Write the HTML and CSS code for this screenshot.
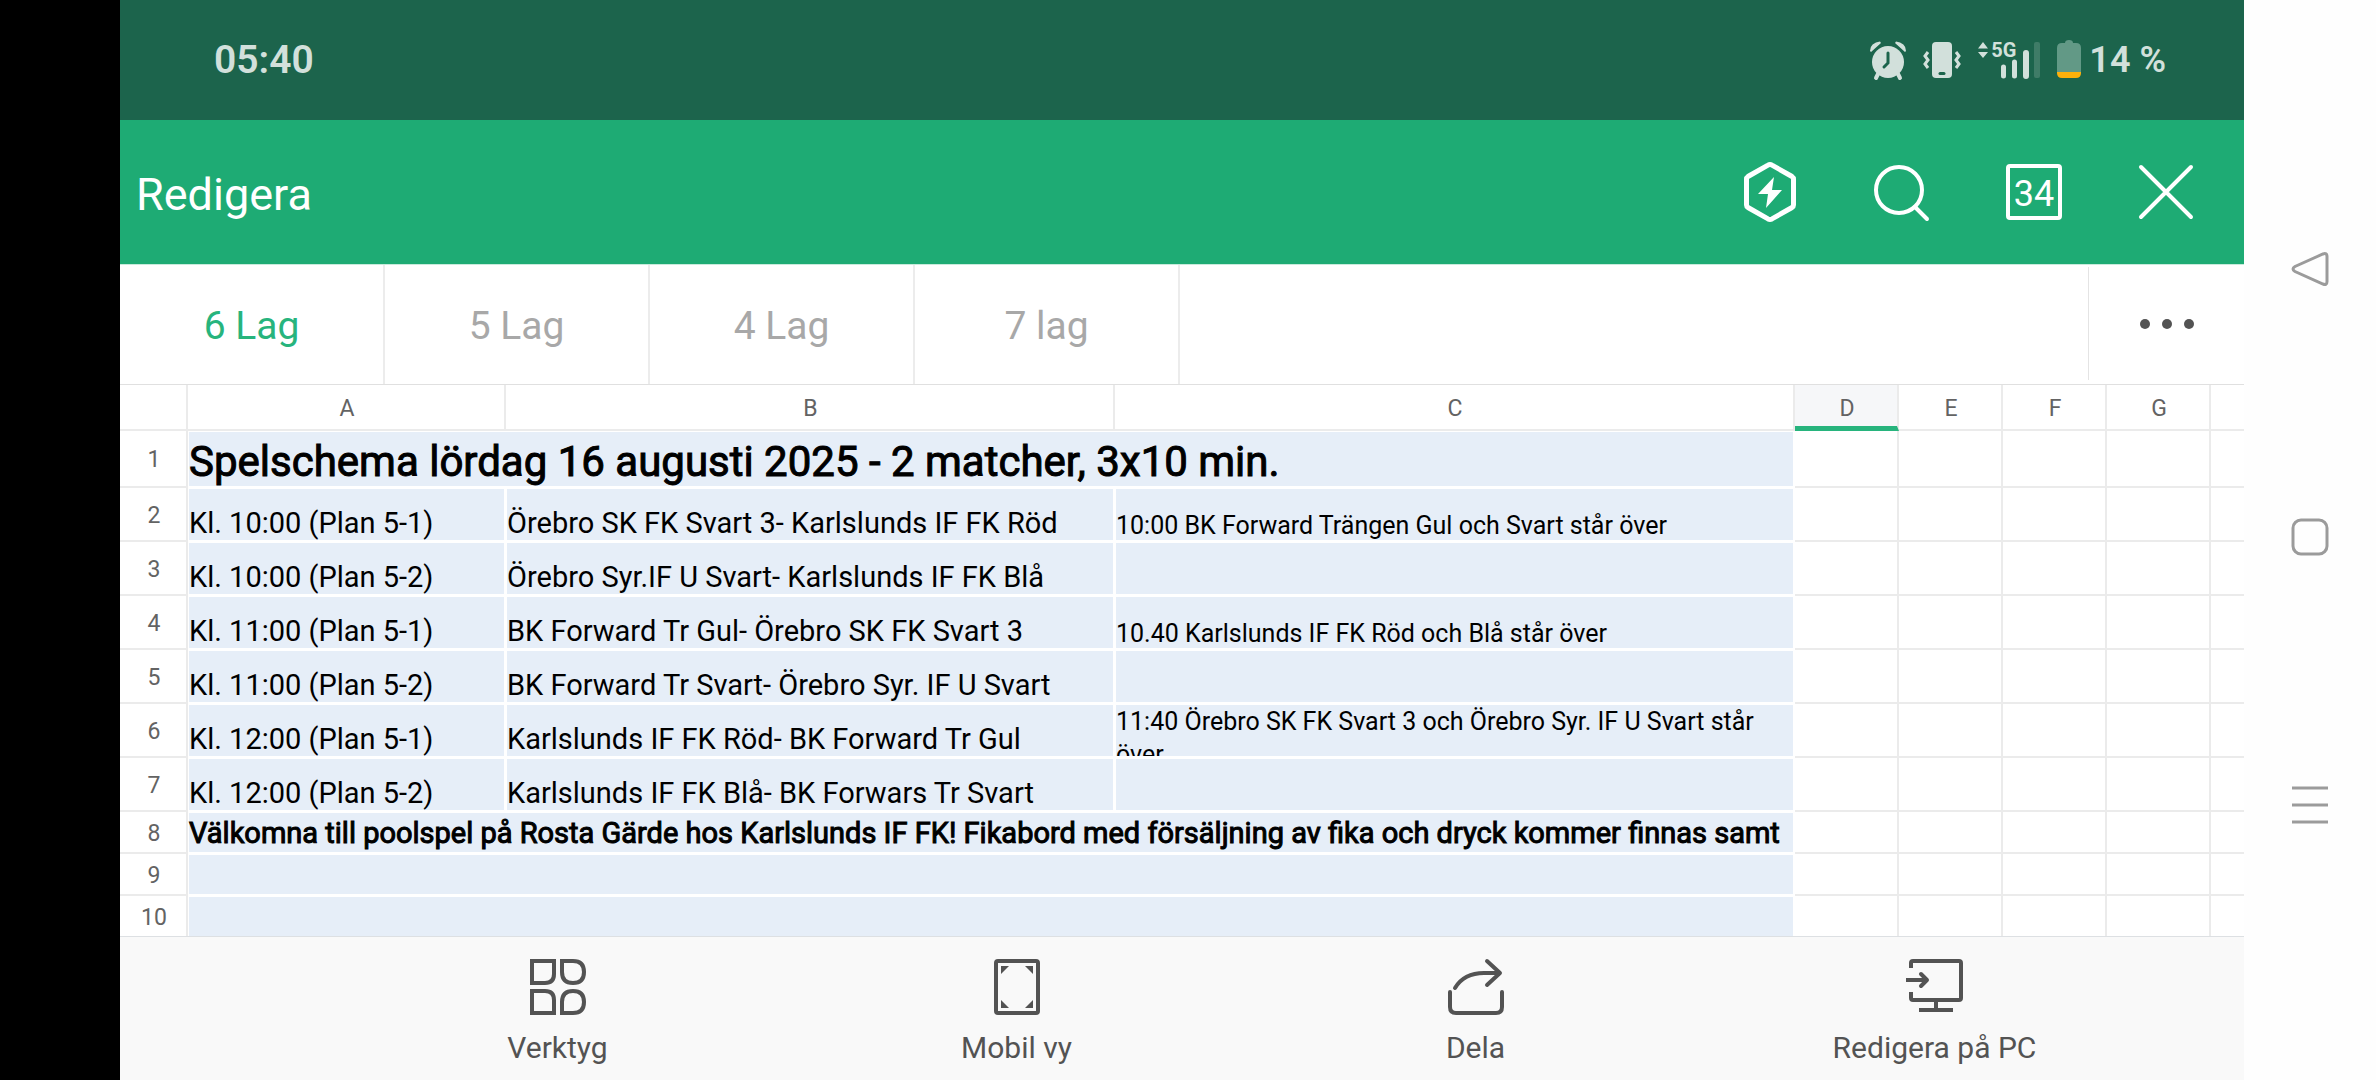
FILE: index.html
```html
<!DOCTYPE html>
<html lang="sv">
<head>
<meta charset="utf-8">
<title>Redigera</title>
<link rel="stylesheet" href="styles.css">
</head>
<body>
<div class="device">
  <div class="cutout"></div>
  <div class="app">
    <div class="status">
      <time class="clock">05:40</time>
      <div class="indicators">
        <svg class="alarm" width="38" height="40" viewBox="0 0 38 40"><circle cx="19" cy="22" r="16"/><path d="M1 11a11 9 0 0 1 10-9.500l1 1.500-10 9zM37 11a11 9 0 0 0-10-9.500l-1 1.500 10 9z"/><path class="alarm-feet" d="M9 34l-2 4M29 34l2 4"/><path class="alarm-hands" d="M19 13v10l-4 4"/></svg>
        <svg class="vibrate" width="38" height="40" viewBox="0 0 38 40"><rect x="9" y="2" width="20" height="36" rx="4"/><path class="waves" d="M5 12l-3 4 3 4-3 4 3 4M33 12l3 4-3 4 3 4-3 4"/><path class="slot" d="M17 33.500h4"/></svg>
        <div class="network">
          <svg width="64" height="40" viewBox="0 0 64 40"><path d="M1 8.500l5-6.500 5 6.500zM1 12h10l-5 6zM24 27a2 2 0 0 1 5 0v9a2 2 0 0 1-5 0zM35 22a2 2 0 0 1 5 0v14a2 2 0 0 1-5 0zM46 13a2 2 0 0 1 6 0v23a2 2 0 0 1-6 0z"/><rect class="faint" x="57" y="2" width="6" height="36" rx="2"/></svg>
          <span class="network-type">5G</span>
        </div>
        <svg class="battery" width="24" height="40" viewBox="0 0 24 40"><path class="battery-body" d="M8 3q0-3 4-3t4 3h3q5 0 5 5v24H0V8q0-5 5-5z"/><path class="battery-level" d="M0 32h24v1q0 5-5 5H5q-5 0-5-5z"/></svg>
        <span class="percent">14 %</span>
      </div>
    </div>

    <header class="titlebar">
      <h1>Redigera</h1>
      <div class="actions">
        <button aria-label="Boost"><svg width="60" height="64" viewBox="0 0 60 64"><path class="line heavy" d="M30 4.500q-1 0-2 .6L8 16.500q-1.500 1-1.500 2.500v26q0 1.500 1.500 2.500l20 11.400q2 1 4 0l20-11.400q1.500-1 1.500-2.500V19q0-1.500-1.500-2.500L32 5.100q-1-.6-2-.6z"/><path class="solid" d="M34 17L18 34h10l-2 14 16-18H32z"/></svg></button>
        <button aria-label="Sök"><svg width="60" height="64" viewBox="0 0 60 64"><ellipse class="line" cx="27" cy="30" rx="23" ry="23"/><path class="line" d="M43 47l12 12"/></svg></button>
        <button class="windows" aria-label="Öppna dokument"><span>34</span></button>
        <button aria-label="Stäng"><svg width="60" height="64" viewBox="0 0 60 64"><path class="line" d="M5 7l50 50M55 7L5 57"/></svg></button>
      </div>
    </header>

    <nav class="sheets">
      <button class="sheet current">6 Lag</button>
      <button class="sheet">5 Lag</button>
      <button class="sheet">4 Lag</button>
      <button class="sheet">7 lag</button>
      <button class="more" aria-label="Fler blad"><i></i><i></i><i></i></button>
    </nav>

    <main class="grid">
      <table>
        <colgroup><col class="c-num"><col class="c-a"><col class="c-b"><col class="c-c"><col class="c-std"><col class="c-std"><col class="c-std"><col class="c-std"><col></colgroup>
        <thead>
          <tr><th></th><th>A</th><th>B</th><th>C</th><th class="active">D</th><th>E</th><th>F</th><th>G</th><th></th></tr>
        </thead>
        <tbody>
          <tr class="tall"><th>1</th><td class="fill title" colspan="3">Spelschema lördag 16 augusti 2025 - 2 matcher, 3x10 min.</td><td></td><td></td><td></td><td></td><td></td></tr>
          <tr><th>2</th><td class="fill">Kl. 10:00 (Plan 5-1)</td><td class="fill">Örebro SK FK Svart 3- Karlslunds IF FK Röd</td><td class="fill note">10:00 BK Forward Trängen Gul och Svart står över</td><td></td><td></td><td></td><td></td><td></td></tr>
          <tr><th>3</th><td class="fill">Kl. 10:00 (Plan 5-2)</td><td class="fill">Örebro Syr.IF U Svart- Karlslunds IF FK Blå</td><td class="fill note"></td><td></td><td></td><td></td><td></td><td></td></tr>
          <tr><th>4</th><td class="fill">Kl. 11:00 (Plan 5-1)</td><td class="fill">BK Forward Tr Gul- Örebro SK FK Svart 3</td><td class="fill note">10.40 Karlslunds IF FK Röd och Blå står över</td><td></td><td></td><td></td><td></td><td></td></tr>
          <tr><th>5</th><td class="fill">Kl. 11:00 (Plan 5-2)</td><td class="fill">BK Forward Tr Svart- Örebro Syr. IF U Svart</td><td class="fill note"></td><td></td><td></td><td></td><td></td><td></td></tr>
          <tr><th>6</th><td class="fill">Kl. 12:00 (Plan 5-1)</td><td class="fill">Karlslunds IF FK Röd- BK Forward Tr Gul</td><td class="fill note"><div class="clip">11:40 Örebro SK FK Svart 3 och Örebro Syr. IF U Svart står över</div></td><td></td><td></td><td></td><td></td><td></td></tr>
          <tr><th>7</th><td class="fill">Kl. 12:00 (Plan 5-2)</td><td class="fill">Karlslunds IF FK Blå- BK Forwars Tr Svart</td><td class="fill note"></td><td></td><td></td><td></td><td></td><td></td></tr>
          <tr class="short"><th>8</th><td class="fill strong" colspan="3">Välkomna till poolspel på Rosta Gärde hos Karlslunds IF FK! Fikabord med försäljning av fika och dryck kommer finnas samt</td><td></td><td></td><td></td><td></td><td></td></tr>
          <tr class="short"><th>9</th><td class="fill" colspan="3"></td><td></td><td></td><td></td><td></td><td></td></tr>
          <tr class="short"><th>10</th><td class="fill" colspan="3"></td><td></td><td></td><td></td><td></td><td></td></tr>
        </tbody>
      </table>
    </main>

    <footer class="toolbar">
      <button><svg width="60" height="60" viewBox="0 0 60 60"><path d="M4 4h22v13q0 9-9 9H4zM34 4h11q11 0 11 11t-11 11-11-11zM4 34h13q9 0 9 9v13H4zM45 34q11 0 11 11t-11 11H34V45q0-11 11-11z"/></svg><span>Verktyg</span></button>
      <button><svg width="60" height="60" viewBox="0 0 60 60"><rect x="9" y="4" width="42" height="52" rx="2"/><path class="fillin" d="M14 9h8l-8 8zM46 9h-8l8 8zM14 51h8l-8-8zM46 51h-8l8-8z"/></svg><span>Mobil vy</span></button>
      <button><svg width="60" height="60" viewBox="0 0 60 60"><path class="round" d="M4 35v15q0 6 6 6h40q6 0 6-6V35M9 31Q18 16 38 16h15M41 4l13 12-13 12"/></svg><span>Dela</span></button>
      <button><svg width="60" height="60" viewBox="0 0 60 60"><path d="M6 11V6q0-2 2-2h46q2 0 2 2v35q0 2-2 2H8q-2 0-2-2v-6M31 43v9M14 53h34M1 23h22"/><path class="round" d="M16 17l6 6-6 6"/></svg><span>Redigera på PC</span></button>
    </footer>
  </div>

  <nav class="sysnav">
    <button aria-label="Tillbaka"><svg width="40" height="40" viewBox="0 0 40 40"><path d="M33 5q4-1.500 4 2.500v25q0 4-4 2.500L5 22.500q-4-2.500 0-5z"/></svg></button>
    <button aria-label="Hem"><svg width="40" height="40" viewBox="0 0 40 40"><rect x="3" y="3" width="34" height="34" rx="8"/></svg></button>
    <button aria-label="Senaste"><svg width="40" height="40" viewBox="0 0 40 40"><path d="M2 3h36M2 20h36M2 37h36"/></svg></button>
  </nav>
</div>
</body>
</html>
```
FILE: styles.css
```css
* { box-sizing: border-box; }

body {
  margin: 0;
  font-family: Roboto, "Liberation Sans", sans-serif;
  background: #fefefe;
}

h1 { margin: 0; font-weight: 400; }

button {
  margin: 0;
  padding: 0;
  border: 0;
  background: none;
  font: inherit;
  color: inherit;
}

svg { display: block; overflow: visible; }

.device { display: flex; height: 100vh; }
.cutout { flex: 0 0 120px; background: #000; }
.app { flex: 1; min-width: 0; display: flex; flex-direction: column; background: #fff; }

/* Status bar */
.status {
  flex: 0 0 120px;
  display: flex;
  justify-content: space-between;
  align-items: center;
  padding: 0 78px 0 94px;
  background: #1c644c;
  color: #d2e0db;
  font-weight: 600;
}
.clock { font-size: 39px; }
.indicators { display: flex; align-items: center; fill: #d2e0db; }
.alarm-feet { stroke: #d2e0db; stroke-width: 4; stroke-linecap: round; }
.alarm-hands { fill: none; stroke: #1c644c; stroke-width: 3; stroke-linecap: round; }
.vibrate { margin-left: 16px; }
.waves { fill: none; stroke: #d2e0db; stroke-width: 3; }
.slot { stroke: #1c644c; stroke-width: 3; stroke-linecap: round; }
.network { position: relative; margin-left: 16px; }
.network-type { position: absolute; left: 14px; top: 0; font-size: 20px; line-height: 20px; font-weight: 700; }
.faint { fill: #3f7c67; }
.battery { margin-left: 16px; }
.battery-body { fill: #629986; }
.battery-level { fill: #fdb10b; }
.percent { margin-left: 8px; font-size: 36px; }

/* Title bar */
.titlebar {
  flex: 0 0 144px;
  display: flex;
  justify-content: space-between;
  align-items: center;
  padding: 0 48px 0 16px;
  background: #1eab74;
  color: #fff;
}
.titlebar h1 { padding-top: 4px; font-size: 45px; }
.actions { display: flex; gap: 72px; }
.line { fill: none; stroke: #fff; stroke-width: 4; stroke-linecap: round; }
.heavy { stroke-width: 5; }
.solid { fill: #fff; }
.windows { width: 60px; height: 64px; display: grid; place-items: center; }
.windows span {
  width: 56px;
  height: 56px;
  border: 4px solid #fff;
  border-radius: 4px;
  font-size: 36px;
  line-height: 52px;
  text-align: center;
}

/* Sheet tabs */
.sheets { flex: 0 0 121px; display: flex; border-top: 1px solid #c8ebdc; border-bottom: 1px solid #e0e0e0; }
.sheet { flex: 0 0 265px; padding-top: 2px; border-right: 2px solid #ececec; font-size: 39px; color: #a8a8a8; }
.current { color: #27b47d; }
.more {
  flex: 0 0 156px;
  margin: 2px 0 4px auto;
  border-left: 1px solid #e4e4e4;
  display: flex;
  justify-content: center;
  align-items: center;
  gap: 12px;
}
.more i { width: 10px; height: 10px; border-radius: 50%; background: #535353; }

/* Cells */
.grid { flex: 1; min-height: 0; overflow: hidden; }
table { width: 100%; table-layout: fixed; border-collapse: separate; border-spacing: 0; }
.c-num { width: 68px; }
.c-a { width: 318px; }
.c-b { width: 609px; }
.c-c { width: 680px; }
.c-std { width: 104px; }
th, td { padding: 0; border: solid #ebebeb; border-width: 0 2px 2px 0; }
th { padding: 2px 0 0 2px; font-size: 23px; font-weight: 400; color: #636363; text-align: center; }
thead th { height: 46px; }
th:last-child, td:last-child { border-right: 0; }
.active { padding-top: 5px; background: #f6f7f9; border-bottom: 5px solid #27b47d; }
tbody tr { height: 54px; }
tbody .tall { height: 57px; }
tbody .short { height: 42px; }
td { font-size: 29px; color: #000; vertical-align: bottom; white-space: nowrap; }
.fill { border-color: #fff; border-top-width: 1px; border-left-width: 1px; background: #e6eef8; }
.note { font-size: 25px; white-space: normal; }
.title { font-size: 42px; line-height: 49px; -webkit-text-stroke: 1px #000; }
.strong { vertical-align: middle; -webkit-text-stroke: 1px #000; }
.clip { height: 51px; line-height: 33px; overflow: hidden; }

/* Bottom toolbar */
.toolbar {
  flex: 0 0 144px;
  display: flex;
  padding: 0 80px 0 208px;
  border-top: 1px solid #dde0e3;
  background: #f9f9f9;
  color: #535353;
}
.toolbar button {
  flex: 1;
  display: flex;
  flex-direction: column;
  align-items: center;
  padding-top: 20px;
  gap: 14px;
  font-size: 30px;
  line-height: 34px;
}
.toolbar svg { fill: none; stroke: #535353; stroke-width: 4; }
.toolbar .fillin { fill: #535353; stroke: none; }
.toolbar .round { stroke-linecap: round; stroke-linejoin: round; }

/* System navigation */
.sysnav {
  flex: 0 0 132px;
  display: flex;
  flex-direction: column;
  align-items: center;
  justify-content: center;
  padding-bottom: 6px;
}
.sysnav button { flex: 0 1 268px; display: grid; place-items: center; }
.sysnav svg { fill: none; stroke: #9b9b9b; stroke-width: 3; }
```
